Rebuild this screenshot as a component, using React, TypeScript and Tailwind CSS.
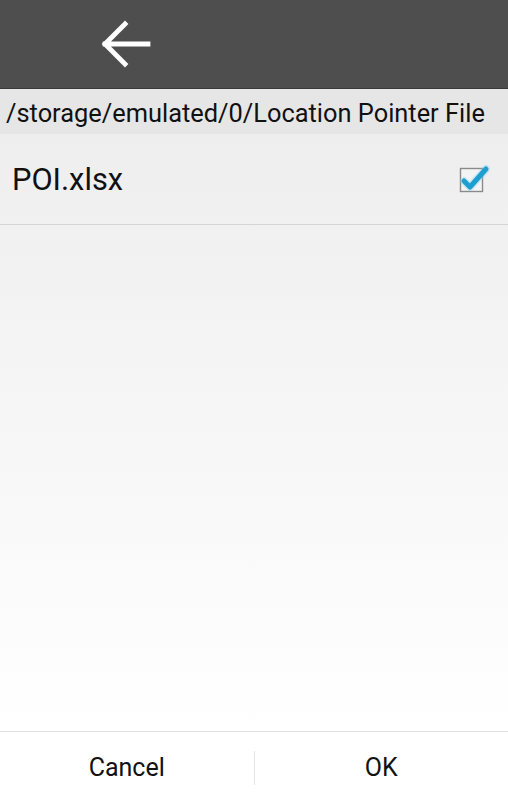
function BackArrow() {
	return (
		<svg width="52" height="48" viewBox="0 0 52 48" className="block">
			<path d="M6 24 H49 M6 24 L26 4 M6 24 L26 44" fill="none" stroke="#ffffff" strokeWidth="4.8" strokeLinecap="square" strokeLinejoin="miter" />
		</svg>
	);
}

function CheckBox() {
	return (
		<svg width="32" height="34" viewBox="0 0 32 34" className="block">
			<rect x="1.5" y="6.5" width="22" height="23" fill="#f4f4f4" stroke="#8a8a8a" strokeWidth="1.4" />
			<path d="M5 19 L11 25 L27 7" fill="none" stroke="#7fd0ee" strokeWidth="8" strokeLinecap="round" strokeLinejoin="round" opacity="0.35" />
			<path d="M5 19 L11 25 L27 7" fill="none" stroke="#1e9fd0" strokeWidth="5" strokeLinecap="round" strokeLinejoin="round" />
		</svg>
	);
}

export default function App() {
	return (
		<main
			className="w-[508px] h-[800px] flex flex-col bg-white text-black"
			style={{ fontFamily: "Roboto, 'Noto Sans', sans-serif" }}
		>
			<header className="h-[89px] shrink-0 bg-[#4e4e4e] border-b border-[#3a3a3a] flex items-center pl-[99px]">
				<BackArrow />
			</header>

			<div className="h-[45px] shrink-0 bg-[#e6e6e6] flex items-center pl-[6px] pt-[3px] text-[25.4px] text-[#111] whitespace-nowrap">
				/storage/emulated/0/Location Pointer File
			</div>

			<section className="flex-1 flex flex-col bg-gradient-to-b from-[#eeeeee] to-[#ffffff]">
				<div className="h-[91px] flex items-center justify-between pl-[12px] pr-[17px] border-b border-[#d5d5d5]">
					<span className="text-[30.8px] text-[#111] pt-[3px]">POI.xlsx</span>
					<CheckBox />
				</div>
			</section>

			<footer className="h-[69px] shrink-0 bg-white border-t border-[#e0e0e0] flex items-center">
				<button className="flex-1 h-full text-[25px] text-[#111] pt-[4px]">Cancel</button>
				<div className="w-px h-[34px] bg-[#e4e4e4] mt-[4px]" />
				<button className="flex-1 h-full text-[25px] text-[#111] pt-[4px]">OK</button>
			</footer>
		</main>
	);
}
